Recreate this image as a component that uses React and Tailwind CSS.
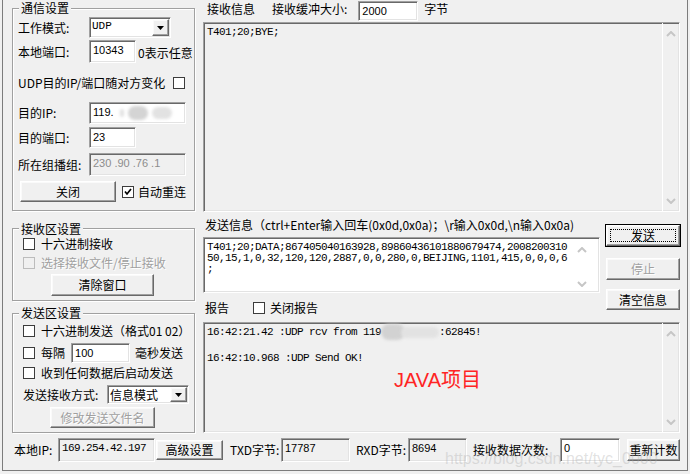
import React from 'react'

const sunken = 'border border-t-[#a0a0a0] border-l-[#a0a0a0] border-r-white border-b-white shadow-[inset_1px_1px_0_#696969,inset_-1px_-1px_0_#e3e3e3]'
const raised = 'border border-t-white border-l-white border-r-[#696969] border-b-[#696969] shadow-[inset_-1px_-1px_0_#a0a0a0,inset_1px_1px_0_#fafafa]'
const mono = "font-['Liberation_Mono','Noto_Sans_CJK_SC',monospace]"
const sans = "font-['Liberation_Sans','Noto_Sans_CJK_SC',sans-serif]"
const dim = 'text-[#a0a0a0] [text-shadow:1px_1px_0_#fff]'
const group = 'border border-[#a0a0a0] shadow-[inset_1px_1px_0_#fff,1px_1px_0_#fff]'

function Edit({ className = '', gray, children }) {
  return (
    <div className={`${sunken} ${gray ? 'bg-[#f0f0f0]' : 'bg-white'} px-[3px] pt-[2px] text-[11px] leading-[14px] whitespace-nowrap overflow-hidden ${className}`}>
      {children}
    </div>
  )
}

function Check({ checked, disabled }) {
  return (
    <span className={`w-[12px] h-[12px] shrink-0 border ${disabled ? 'border-[#bcbcbc] bg-[#f0f0f0]' : 'border-[#3c3c3c] bg-white'} flex items-center justify-center`}>
      {checked && (
        <svg width="8" height="8" viewBox="0 0 8 8">
          <path d="M1 3.5 L3 6 L7 1" fill="none" stroke="#000" strokeWidth="1.7" />
        </svg>
      )}
    </span>
  )
}

function Btn({ className = '', disabled, focus, children }) {
  return (
    <div className={`${focus ? 'outline outline-1 outline-black p-[3px]' : ''} ${raised} bg-[#f0f0f0] flex items-center justify-center ${disabled ? dim : ''} ${className}`}>
      {focus ? (
        <span className="flex-1 self-stretch flex items-center justify-center border border-dotted border-black">{children}</span>
      ) : children}
    </div>
  )
}

function Combo({ className = '', children }) {
  return (
    <div className={`${sunken} bg-white flex items-stretch ${className}`}>
      <span className="flex-1 pl-[2px] pt-[1px] leading-[15px]">{children}</span>
      <span className={`${raised} w-[17px] m-[1px] bg-[#f0f0f0] flex items-center justify-center`}>
        <svg width="7" height="4" viewBox="0 0 7 4"><path d="M0 0 H7 L3.5 4 Z" fill="#000" /></svg>
      </span>
    </div>
  )
}

function Chevron({ down }) {
  return (
    <svg width="10" height="6" viewBox="0 0 10 6">
      <polyline points={down ? '1,1 5,5 9,1' : '1,5 5,1 9,5'} fill="none" stroke="#c6c6c6" strokeWidth="2" />
    </svg>
  )
}

function VScroll({ className = '' }) {
  return (
    <div className={`w-[17px] shrink-0 flex flex-col items-center justify-between ${className}`}>
      <Chevron />
      <Chevron down />
    </div>
  )
}

function Blob({ className = '' }) {
  return <span className={`inline-block align-middle rounded-full blur-[1.5px] ${className}`} />
}

export default function App() {
  return (
    <div className={`relative w-[690px] h-[474px] bg-[#f0f0f0] overflow-hidden text-black text-[12px] leading-[14px] font-['Noto_Sans_CJK_SC',sans-serif]`}>
      <div className="ml-[2px] w-[686px] h-[471px] border-l border-r border-b border-[#7c7c7c] flex flex-col">
        <div className="flex h-[433px]">
          {/* left column */}
          <div className="ml-[9px] w-[183px] flex flex-col">
            <fieldset className={`h-[211px] ${group}`}>
              <legend className="ml-[6px] px-[2px] leading-[16px] bg-[#f0f0f0]">通信设置</legend>
              <div className="mt-[1px] h-[21px] flex items-center pl-[5px]">
                <span className="w-[71px]">工作模式:</span>
                <Combo className={`w-[82px] h-[21px] ${mono} text-[11px]`}>UDP</Combo>
              </div>
              <div className="mt-[2px] h-[23px] flex items-center pl-[5px]">
                <span className="w-[71px]">本地端口:</span>
                <Edit className={`w-[47px] h-[23px] ${sans}`}>10343</Edit>
                <span className="ml-[2px] mt-[3px]">0表示任意</span>
              </div>
              <div className="mt-[13px] h-[14px] flex items-center justify-between pl-[5px] pr-[9px]">
                <span>UDP目的IP/端口随对方变化</span>
                <Check />
              </div>
              <div className="mt-[12px] h-[22px] flex items-center pl-[5px]">
                <span className="w-[71px]">目的IP:</span>
                <Edit className={`w-[97px] h-[22px] ${sans}`}>
                  119.<Blob className="ml-[6px] w-[4px] h-[8px] bg-[#e0e0e0]" />
                  <Blob className="ml-[4px] w-[20px] h-[14px] bg-[#d4d4d4]" />
                  <Blob className="ml-[4px] w-[20px] h-[12px] bg-[#e2e2e2]" />
                </Edit>
              </div>
              <div className="mt-[3px] h-[21px] flex items-center pl-[5px]">
                <span className="w-[71px]">目的端口:</span>
                <Edit className={`w-[47px] h-[21px] ${sans}`}>23</Edit>
              </div>
              <div className="mt-[5px] h-[23px] flex items-center pl-[5px]">
                <span className="w-[71px]">所在组播组:</span>
                <Edit gray className={`w-[97px] h-[23px] ${sans} text-[#8c8c8c]`}>230 .90 .76 .1</Edit>
              </div>
              <div className="mt-[5px] h-[21px] flex items-center">
                <Btn className="ml-[7px] w-[96px] h-[21px]">关闭</Btn>
                <span className="ml-[6px]"><Check checked /></span>
                <span className="ml-[4px]">自动重连</span>
              </div>
            </fieldset>

            <fieldset className={`mt-[10px] h-[81px] ${group}`}>
              <legend className="ml-[6px] px-[2px] leading-[16px] bg-[#f0f0f0]">接收区设置</legend>
              <div className="h-[14px] flex items-center pl-[10px]">
                <Check />
                <span className="ml-[6px]">十六进制接收</span>
              </div>
              <div className="mt-[5px] h-[14px] flex items-center pl-[10px]">
                <Check disabled />
                <span className={`ml-[6px] ${dim}`}>选择接收文件/停止接收</span>
              </div>
              <Btn className="mt-[4px] ml-[38px] w-[103px] h-[22px]">清除窗口</Btn>
            </fieldset>

            <fieldset className={`mt-[4px] h-[128px] ${group}`}>
              <legend className="ml-[6px] px-[2px] leading-[16px] bg-[#f0f0f0]">发送区设置</legend>
              <div className="mt-[3px] h-[14px] flex items-center pl-[10px]">
                <Check />
                <span className="ml-[6px]">十六进制发送（格式01 02）</span>
              </div>
              <div className="mt-[5px] h-[20px] flex items-center pl-[10px]">
                <Check />
                <span className="ml-[6px]">每隔</span>
                <Edit className={`ml-[6px] w-[59px] h-[20px] ${sans}`}>100</Edit>
                <span className="ml-[5px]">毫秒发送</span>
              </div>
              <div className="mt-[3px] h-[14px] flex items-center pl-[10px]">
                <Check />
                <span className="ml-[6px]">收到任何数据后启动发送</span>
              </div>
              <div className="mt-[5px] h-[19px] flex items-center pl-[10px]">
                <span className="w-[84px]">发送接收方式:</span>
                <Combo className="w-[82px] h-[19px]">信息模式</Combo>
              </div>
              <Btn disabled className="mt-[3px] ml-[37px] w-[105px] h-[21px]">修改发送文件名</Btn>
            </fieldset>
          </div>

          {/* right column */}
          <div className="ml-[8px] w-[477px] flex flex-col">
            <div className="h-[22px] flex items-start">
              <span className="ml-[4px] mt-[2px]">接收信息</span>
              <span className="ml-[17px] mt-[2px]">接收缓冲大小:</span>
              <Edit className={`ml-[11px] mt-[1px] w-[60px] h-[20px] ${sans}`}>2000</Edit>
              <span className="ml-[6px] mt-[2px]">字节</span>
            </div>

            <div className={`h-[190px] ${sunken} bg-[#f0f0f0] flex`}>
              <div className={`flex-1 pl-[3px] pt-[3px] ${mono} text-[11px] tracking-[-0.6px] leading-[12px]`}>T401;20;BYE;</div>
              <VScroll className="border-l border-white pt-[8px] pb-[7px]" />
            </div>

            <div className="h-[110px] flex">
              <div className="w-[397px] flex flex-col">
                <div className="h-[25px] flex items-center pl-[2px] whitespace-nowrap">
                  发送信息（ctrl+Enter输入回车(0x0d,0x0a)；\r输入0x0d,\n输入0x0a)
                </div>
                <div className={`h-[56px] ${sunken} bg-white flex`}>
                  <div className={`flex-1 pl-[3px] pt-[4px] ${mono} text-[11px] tracking-[-0.6px] leading-[11px] whitespace-nowrap overflow-hidden`}>
                    <div>T401;20;DATA;867405040163928,89860436101880679474,2008200310</div>
                    <div>50,15,1,0,32,120,120,2887,0,0,280,0,BEIJING,1101,415,0,0,0,6</div>
                    <div>;</div>
                  </div>
                  <div className="w-[25px] shrink-0 flex flex-col items-start pl-[3px] pt-[9px] pb-[5px] justify-between">
                    <Chevron />
                    <Chevron down />
                  </div>
                </div>
                <div className="h-[29px] flex items-center pl-[2px]">
                  <span>报告</span>
                  <span className="ml-[24px]"><Check /></span>
                  <span className="ml-[5px]">关闭报告</span>
                </div>
              </div>
              <div className="ml-[6px] w-[74px] flex flex-col">
                <Btn focus className="mt-[13px] h-[21px]">发送</Btn>
                <Btn disabled className="mt-[12px] h-[22px]">停止</Btn>
                <Btn className="mt-[9px] h-[21px]">清空信息</Btn>
              </div>
            </div>

            <div className={`relative h-[111px] ${sunken} bg-[#f0f0f0] flex`}>
              <div className={`flex-1 pl-[3px] pt-[1px] ${mono} text-[11px] tracking-[-0.6px] leading-[12px] whitespace-nowrap`}>
                <div>
                  16:42:21.42 :UDP rcv from 119
                  <Blob className="w-[24px] h-[16px] bg-[#d2d2d2]" />
                  <Blob className="-ml-[4px] w-[38px] h-[11px] bg-[#e2e2e2]" />
                  :62845!
                </div>
                <div>&nbsp;</div>
                <div>16:42:10.968 :UDP Send OK!</div>
              </div>
              <VScroll className="border-l border-white pt-[8px] pb-[7px]" />
              <span className={`absolute left-[190px] top-[45px] text-[20px] leading-[24px] text-[#ff2424] ${sans}`}>JAVA项目</span>
            </div>
          </div>
        </div>

        {/* status row */}
        <div className="mt-[4px] h-[25px] flex items-center">
          <span className="ml-[11px] w-[44px]">本地IP:</span>
          <Edit gray className={`w-[97px] h-[24px] ${mono} tracking-[-0.6px]`}>169.254.42.197</Edit>
          <Btn className="ml-[1px] w-[67px] h-[20px]">高级设置</Btn>
          <span className="ml-[7px] w-[51px]">TXD字节:</span>
          <Edit gray className={`w-[69px] h-[24px] ${sans}`}>17787</Edit>
          <span className="ml-[6px] w-[52px]">RXD字节:</span>
          <Edit gray className={`w-[59px] h-[24px] ${sans}`}>8694</Edit>
          <span className="ml-[6px] w-[87px]">接收数据次数:</span>
          <Edit className={`w-[60px] h-[24px] ${sans}`}>0</Edit>
          <Btn className="ml-[7px] w-[53px] h-[22px]">重新计数</Btn>
        </div>
      </div>

      <span className={`absolute left-[445px] top-[449px] text-[16px] leading-[20px] text-[rgba(170,170,170,0.35)] ${sans}`}>https://blog.csdn.net/tyc_0000</span>
    </div>
  )
}
